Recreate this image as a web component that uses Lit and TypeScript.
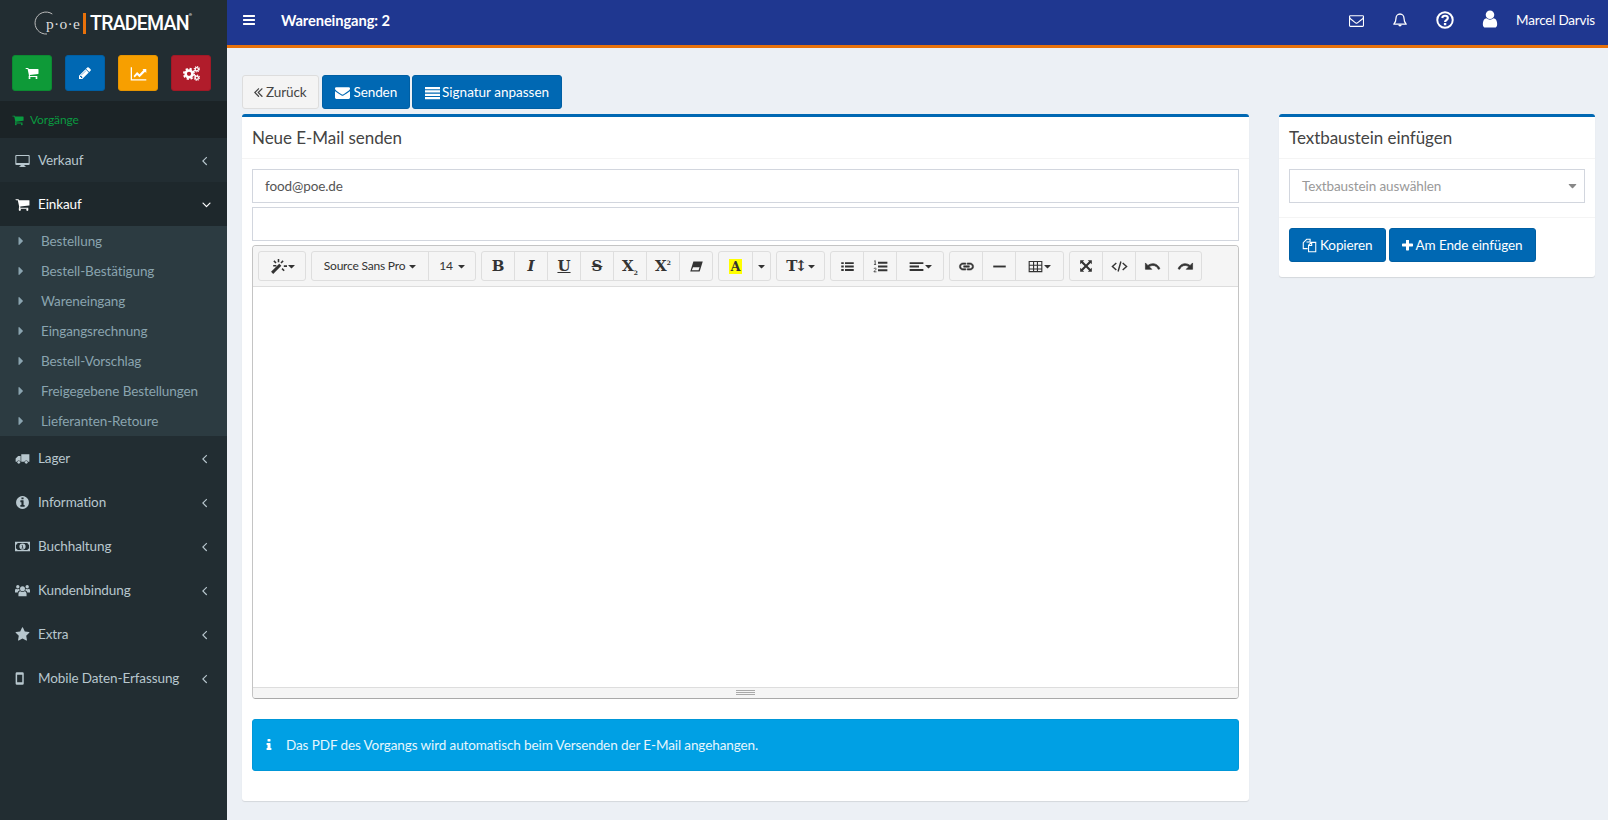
import { LitElement, html, svg, css, TemplateResult } from 'lit';
import { customElement } from 'lit/decorators.js';

// font-awesome 4 glyph outlines, 1792 grid
const FA: Record<string, string> = {
  cart: 'M704 1536q0 52-38 90t-90 38-90-38-38-90 38-90 90-38 90 38 38 90zm896 0q0 52-38 90t-90 38-90-38-38-90 38-90 90-38 90 38 38 90zm128-1088v512q0 24-16.5 42.5t-40.5 21.5l-1044 122q13 60 13 70 0 16-24 64h920q26 0 45 19t19 45-19 45-45 19h-1024q-26 0-45-19t-19-45q0-11 8-31.5t16-36 21.5-40 15.5-29.5l-177-823h-204q-26 0-45-19t-19-45 19-45 45-19h256q16 0 28.5 6.5t19.5 15.5 13 24.5 8 26 5.5 29.5 4.5 26h1201q26 0 45 19t19 45z',
  bars: 'M1664 1344v128q0 26-19 45t-45 19h-1408q-26 0-45-19t-19-45v-128q0-26 19-45t45-19h1408q26 0 45 19t19 45zm0-512v128q0 26-19 45t-45 19h-1408q-26 0-45-19t-19-45v-128q0-26 19-45t45-19h1408q26 0 45 19t19 45zm0-512v128q0 26-19 45t-45 19h-1408q-26 0-45-19t-19-45v-128q0-26 19-45t45-19h1408q26 0 45 19t19 45z',
  pencil: 'M491 1536l91-91-235-235-91 91v107h128v128h107zm523-928q0-22-22-22-10 0-17 7l-542 542q-7 7-7 17 0 22 22 22 10 0 17-7l542-542q7-7 7-17zm-54-192l416 416-832 832h-416v-416zm683 96q0 53-37 90l-166 166-416-416 166-165q36-38 90-38 53 0 91 38l235 234q37 39 37 91z',
  star: 'M1728 647q0 22-26 48l-363 354 86 500q1 7 1 20 0 21-10.5 35.5t-30.5 14.5q-19 0-40-12l-449-236-449 236q-22 12-40 12-21 0-31.5-14.5t-10.5-35.5q0-6 2-20l86-500-364-354q-25-27-25-48 0-37 56-46l502-73 225-455q19-41 49-41t49 41l225 455 502 73q56 9 56 46z',
  user: 'M1536 1399q0 109-62.5 187t-150.5 78h-854q-88 0-150.5-78t-62.5-187q0-85 8.5-160.5t31.5-152 58.5-131 94-89 134.5-34.5q131 128 313 128t313-128q76 0 134.5 34.5t94 89 58.5 131 31.5 152 8.5 160.5zm-256-887q0 159-112.5 271.5t-271.5 112.5-271.5-112.5-112.5-271.5 112.5-271.5 271.5-112.5 271.5 112.5 112.5 271.5z',
  plus: 'M1600 736v192q0 40-28 68t-68 28h-416v416q0 40-28 68t-68 28h-192q-40 0-68-28t-28-68v-416h-416q-40 0-68-28t-28-68v-192q0-40 28-68t68-28h416v-416q0-40 28-68t68-28h192q40 0 68 28t28 68v416h416q40 0 68 28t28 68z',
  infoCircle: 'M1152 1376v-160q0-14-9-23t-23-9h-96v-512q0-14-9-23t-23-9h-320q-14 0-23 9t-9 23v160q0 14 9 23t23 9h96v320h-96q-14 0-23 9t-9 23v160q0 14 9 23t23 9h448q14 0 23-9t9-23zm-128-896v-160q0-14-9-23t-23-9h-192q-14 0-23 9t-9 23v160q0 14 9 23t23 9h192q14 0 23-9t9-23zm640 416q0 209-103 385.5t-279.5 279.5-385.5 103-385.5-103-279.5-279.5-103-385.5 103-385.5 279.5-279.5 385.5-103 385.5 103 279.5 279.5 103 385.5z',
  info: 'M1216 1344v128q0 26-19 45t-45 19h-512q-26 0-45-19t-19-45v-128q0-26 19-45t45-19h64v-384h-64q-26 0-45-19t-19-45v-128q0-26 19-45t45-19h384q26 0 45 19t19 45v576h64q26 0 45 19t19 45zm-128-1152v192q0 26-19 45t-45 19h-256q-26 0-45-19t-19-45v-192q0-26 19-45t45-19h256q26 0 45 19t19 45z',
  angleLeft: 'M1203 544q0 13-10 23l-393 393 393 393q10 10 10 23t-10 23l-50 50q-10 10-23 10t-23-10l-466-466q-10-10-10-23t10-23l466-466q10-10 23-10t23 10l50 50q10 10 10 23z',
  angleDown: 'M1395 736q0 13-10 23l-466 466q-10 10-23 10t-23-10l-466-466q-10-10-10-23t10-23l50-50q10-10 23-10t23 10l393 393 393-393q10-10 23-10t23 10l50 50q10 10 10 23z',
  angleDbl: 'M1011 1376q0 13-10 23l-50 50q-10 10-23 10t-23-10l-466-466q-10-10-10-23t10-23l466-466q10-10 23-10t23 10l50 50q10 10 10 23t-10 23l-393 393 393 393q10 10 10 23zm384 0q0 13-10 23l-50 50q-10 10-23 10t-23-10l-466-466q-10-10-10-23t10-23l466-466q10-10 23-10t23 10l50 50q10 10 10 23t-10 23l-393 393 393 393q10 10 10 23z',
  caretRight: 'M1152 896q0 26-19 45l-448 448q-19 19-45 19t-45-19-19-45v-896q0-26 19-45t45-19 45 19l448 448q19 19 19 45z',
  caretDown: 'M1408 704q0 26-19 45l-448 448q-19 19-45 19t-45-19l-448-448q-19-19-19-45t19-45 45-19h896q26 0 45 19t19 45z',
  envelope: 'M1792 710v794q0 66-47 113t-113 47h-1472q-66 0-113-47t-47-113v-794q44 49 101 87 362 246 497 345 57 42 92.5 65.5t94.5 48 110 24.5h2q51 0 110-24.5t94.5-48 92.5-65.5q170-123 498-345 57-39 100-87zm0-294q0 79-49 151t-122 123q-376 261-468 325-10 7-42.5 30.5t-54 38-52 32.5-57.5 27-50 9h-2q-23 0-50-9t-57.5-27-52-32.5-54-38-42.5-30.5q-91-64-262-182.5t-205-142.5q-62-42-117-115.5t-55-136.5q0-78 41.5-130t118.5-52h1472q65 0 112.5 47t47.5 113z',
  envelopeO: 'M1664 1504v-768q-32 36-69 66-268 206-426 338-51 43-83 67t-86.5 48.5-102.5 24.5h-2q-48 0-102.5-24.5t-86.5-48.5-83-67q-158-132-426-338-37-30-69-66v768q0 13 9.5 22.5t22.5 9.5h1472q13 0 22.5-9.5t9.5-22.5zm0-1051v-24.5l-.5-13-3-12.5-5.5-9-9-7.5-14-2.5h-1472q-13 0-22.5 9.5t-9.5 22.5q0 168 147 284 193 152 401 317 6 5 35 29.5t46 37.5 44.5 31.5 50.5 27.5 43 9h2q20 0 43-9t50.5-27.5 44.5-31.5 46-37.5 35-29.5q208-165 401-317 54-43 100.5-115.5t46.5-131.5zm128-37v1088q0 66-47 113t-113 47h-1472q-66 0-113-47t-47-113v-1088q0-66 47-113t113-47h1472q66 0 113 47t47 113z',
};

// hand drawn ones, 24 grid
const SHAPES: Record<string, TemplateResult> = {
  desktop: svg`<path fill-rule="evenodd" d="M2 3h20a1.5 1.5 0 0 1 1.5 1.5v13a1.5 1.5 0 0 1-1.5 1.5H2a1.5 1.5 0 0 1-1.5-1.5v-13A1.5 1.5 0 0 1 2 3zm.2 1.8v11h19.6v-11z"/><path d="M9 19h6l.6 2H17v1.3H7V21h1.4z"/>`,
  truck: svg`<path d="M10 5h13v12h-2.2a3 3 0 0 0-5.6 0H10zM9 8v9H8.8a3 3 0 0 0-5.6 0H1v-5l4-4z"/><circle cx="6" cy="18" r="2.2"/><circle cx="18" cy="18" r="2.2"/>`,
  money: svg`<path fill-rule="evenodd" d="M0 4.5h24v15H0zm4 2a2.500 2.500 0 0 1-2.500 2.500v6A2.500 2.500 0 0 1 4 17.500h16a2.500 2.500 0 0 1 2.500-2.500V9A2.500 2.500 0 0 1 20 6.500zM12 7a5 5 0 1 1 0 10 5 5 0 0 1 0-10zm-1.600 2.800v1.100h1v3h-1V15h3.200v-1.100h-1V9.800z"/>`,
  users: svg`<circle cx="12" cy="9" r="4"/><circle cx="4.500" cy="6" r="2.700"/><circle cx="19.500" cy="6" r="2.700"/><path d="M5.500 21v-3.500c0-2.500 1.500-4.500 3-4.500 1 .8 2.200 1.300 3.500 1.300s2.500-.5 3.500-1.300c1.500 0 3 2 3 4.500V21z"/><path d="M0 15v-3c0-2 1-3 2-3 .8.600 1.600.9 2.500.9s1.700-.3 2.100-.6C7 10 7.300 11 7.600 12 5.500 12.600 4.500 14 4.300 15zM24 15v-3c0-2-1-3-2-3-.8.600-1.600.9-2.500.9s-1.700-.3-2.100-.6c-.4.700-.7 1.700-1 2.700 2.100.6 3.100 2 3.300 3z"/>`,
  mobile: svg`<path fill-rule="evenodd" d="M3 2h9a2 2 0 0 1 2 2v16a2 2 0 0 1-2 2H3a2 2 0 0 1-2-2V4a2 2 0 0 1 2-2zm.4 4v12h8.200V6z"/>`,
  chart: svg`<path d="M1 3h1.800v17H23v1.800H1z"/><path d="M5 15.500l5-5.500 3.500 3L19 7.200l-1.500-1.500H23v5.500l-1.700-1.700-7.800 7.700-3.500-3-3.500 3.500z"/>`,
  cogs: svg`<circle cx="8.500" cy="12.500" r="4.800" fill="none" stroke="currentColor" stroke-width="3.600"/><circle cx="8.500" cy="12.500" r="7.300" fill="none" stroke="currentColor" stroke-width="2.600" stroke-dasharray="3.100 2.630"/><circle cx="19.500" cy="6" r="2.300" fill="none" stroke="currentColor" stroke-width="1.800"/><circle cx="19.500" cy="6" r="3.700" fill="none" stroke="currentColor" stroke-width="1.600" stroke-dasharray="1.600 1.300"/><circle cx="19.500" cy="18" r="2.300" fill="none" stroke="currentColor" stroke-width="1.800"/><circle cx="19.500" cy="18" r="3.700" fill="none" stroke="currentColor" stroke-width="1.600" stroke-dasharray="1.600 1.300"/>`,
  copy: svg`<path fill="none" stroke="currentColor" stroke-width="1.700" d="M9 17H2V7.500L7.500 2H13v5M13 2l-.2 4.500H8V7M10.500 22V11.500l4.500-4.500h7v15zM15.500 7.500V12h-5"/>`,
  bell: svg`<path fill="none" stroke="currentColor" stroke-width="1.900" stroke-linejoin="round" d="M12 3.200c-3.800 0-6 2.800-6 6 0 5-1.200 7-3.300 9h18.600c-2.100-2-3.300-4-3.300-9 0-3.200-2.200-6-6-6z"/><path d="M10.700 3.500a1.300 1.300 0 1 1 2.600 0zM9.500 19.200h5a2.500 2.500 0 0 1-5 0z"/>`,
  question: svg`<circle cx="12" cy="12" r="10.300" fill="none" stroke="currentColor" stroke-width="2.600"/><path fill="none" stroke="currentColor" stroke-width="2.900" d="M8.300 9.300c.3-2 1.800-3 3.800-3 2.200 0 3.700 1.300 3.700 3 0 2.600-3.700 2.800-3.700 5.200"/><path d="M10.500 16h3.200v3h-3.200z"/>`,
  justify: svg`<path d="M0 3h24v3.600H0zM0 8.400h24V12H0zM0 13.800h24v3.600H0zM0 19.200h24v3.600H0z"/>`,
  magic: svg`<path d="M1.500 19.500L13 8l3 3L4.500 22.500z"/><path fill="none" stroke="currentColor" stroke-width="2.200" d="M12 1.500v4.500M5.500 4l3 3M18.500 4l-3 3M19.500 11.500h4.500M4.500 11H9M17 15l3 3"/>`,
  eraser: svg`<path fill-rule="evenodd" d="M7 4h15l-5 16H2zm-.5 9l-2 5h10.800l1.600-5z"/>`,
  list: svg`<path d="M2 5h4v3H2zM8 5h14v3H8zM2 10.500h4v3H2zM8 10.500h14v3H8zM2 16h4v3H2zM8 16h14v3H8z"/>`,
  numlist: svg`<path d="M8 4.500h15v3H8zM8 10.500h15v3H8zM8 16.500h15v3H8z"/><path fill="none" stroke="currentColor" stroke-width="1.300" d="M2 3.500l1.500-1v6M1.500 8.700h3.500M1.500 16c.3-2 4-2 3.500.3-.3 1.300-3.500 2.500-3.500 4.200H5.500"/>`,
  align: svg`<path d="M1 5h22v3H1zM1 10.500h15v3H1zM1 16h22v3H1z"/>`,
  link: svg`<path stroke="currentColor" stroke-width=".8" d="M3.900 12c0-1.710 1.390-3.100 3.100-3.100h4V7H7c-2.760 0-5 2.240-5 5s2.240 5 5 5h4v-1.900H7c-1.710 0-3.100-1.390-3.100-3.100zM8 13h8v-2H8v2zm9-6h-4v1.900h4c1.710 0 3.100 1.390 3.100 3.100s-1.390 3.100-3.100 3.100h-4V17h4c2.760 0 5-2.240 5-5s-2.240-5-5-5z"/>`,
  minus: svg`<path d="M2 10.500h20v3H2z"/>`,
  table: svg`<path fill-rule="evenodd" d="M1 3h22v18H1zm1.800 1.800V9h5.200V4.800zm7 0V9h4.400V4.800zm6.200 0V9h5.200V4.800zM2.800 10.800V15h5.200v-4.200zm7 0V15h4.400v-4.200zm6.200 0V15h5.200v-4.200zM2.800 16.800v2.400h5.200v-2.400zm7 0v2.400h4.400v-2.400zm6.200 0v2.400h5.200v-2.400z"/>`,
  expand: svg`<path d="M2 2h7L6.800 4.200 12 9.400l5.200-5.200L15 2h7v7l-2.200-2.200L14.600 12l5.200 5.200L22 15v7h-7l2.200-2.200L12 14.600l-5.200 5.200L9 22H2v-7l2.200 2.200L9.400 12 4.200 6.800 2 9z"/>`,
  code: svg`<path fill="none" stroke="currentColor" stroke-width="2" d="M7.500 7L2 12l5.500 5M16.500 7L22 12l-5.500 5M14 5l-4 14"/>`,
  undo: svg`<path stroke="currentColor" stroke-width=".9" d="M12.500 8c-2.650 0-5.050.99-6.900 2.600L2 7v9h9l-3.620-3.620c1.390-1.160 3.160-1.880 5.120-1.880 3.540 0 6.550 2.310 7.600 5.500l2.370-.78C21.080 11.030 17.150 8 12.500 8z"/>`,
  redo: svg`<path stroke="currentColor" stroke-width=".9" d="M18.400 10.600C16.550 8.990 14.150 8 11.500 8c-4.650 0-8.580 3.030-9.960 7.220L3.900 16c1.050-3.190 4.050-5.500 7.600-5.500 1.950 0 3.730.72 5.120 1.880L13 16h9V7l-3.600 3.600z"/>`,
};

const fa = (name: string) =>
  html`<svg class="i" viewBox="0 0 1792 1792"><path d=${FA[name]}></path></svg>`;
const ic = (name: string, cls = '') =>
  html`<svg class="i ${cls}" viewBox="0 0 24 24">${SHAPES[name]}</svg>`;

const MENU_TOP = [{ label: 'Verkauf', icon: ic('desktop') }];
const MENU_BOTTOM = [
  { label: 'Lager', icon: ic('truck') },
  { label: 'Information', icon: fa('infoCircle') },
  { label: 'Buchhaltung', icon: ic('money') },
  { label: 'Kundenbindung', icon: ic('users') },
  { label: 'Extra', icon: fa('star') },
  { label: 'Mobile Daten-Erfassung', icon: ic('mobile') },
];
const SUB_ITEMS = [
  'Bestellung',
  'Bestell-Bestätigung',
  'Wareneingang',
  'Eingangsrechnung',
  'Bestell-Vorschlag',
  'Freigegebene Bestellungen',
  'Lieferanten-Retoure',
];

const caret = html`<svg class="i caret" viewBox="400 500 992 800"><path d=${FA.caretDown}></path></svg>`;
const dbl = html`<svg class="dbl" viewBox="448 448 950 1010"><path d=${FA.angleDbl}></path></svg>`;
const plus = html`<svg class="plus" viewBox="192 192 1408 1408"><path d=${FA.plus}></path></svg>`;

@customElement('app-root')
export class AppRoot extends LitElement {
  static styles = css`
    :host {
      display: block;
      height: 820px;
      overflow: hidden;
      font-family: 'Lato', 'Liberation Sans', sans-serif;
      font-size: 13.5px;
      letter-spacing: -.1px;
      color: #333;
      background: #ecf0f5;
    }
    * { box-sizing: border-box; }
    .i { width: 1em; height: 1em; fill: currentColor; display: block; flex: none; }
    .page { display: grid; grid-template-columns: 227px 1fr; height: 100%; }

    /* sidebar */
    .side { background: #222d32; color: #b8c7ce; }
    .logo { height: 47px; display: flex; align-items: center; padding-left: 34px; position: relative; color: #fff; }
    .logo svg { position: absolute; left: 33px; top: 7px; }
    .poe { font-family: 'Liberation Serif', serif; font-size: 15.5px; color: #ddd; padding-left: 12px; letter-spacing: .3px; width: 49px; }
    .logo-bar { width: 3px; height: 21px; background: #e8710a; margin-right: 4px; }
    .trademan { font-family: 'Roboto', sans-serif; font-weight: 500; font-size: 19.5px; letter-spacing: -.75px; line-height: 1; }
    .trademan sup { font-size: 4px; letter-spacing: 0; vertical-align: 14px; line-height: 0; }
    .quick { display: flex; gap: 13px; padding: 8px 12px 10px; }
    .quick a { width: 40px; height: 36px; border-radius: 3px; display: flex; align-items: center; justify-content: center; color: #fff; font-size: 14px; }
    .q-green { background: #0e9a38; border: 1px solid #0c8a32; }
    .q-blue { background: #0068b3; border: 1px solid #005fa3; }
    .q-orange { background: #f79f00; border: 1px solid #e69400; }
    .q-red { background: #b11c2b; border: 1px solid #a01926; }
    .q-orange .i, .q-red .i { font-size: 17px; }
    .vorgaenge { height: 37px; background: #1b2326; color: #0a9a40; font-size: 12px; display: flex; align-items: center; padding-left: 12px; gap: 6px; }
    .item { height: 44px; display: flex; align-items: center; padding: 0 15px; }
    .item .i:first-child { font-size: 15px; }
    .item .lbl { margin-left: 8px; flex: 1; }
    .item .arrow { font-size: 14px; }
    .item.open { background: #1e282c; color: #fff; }
    .item.open .arrow { margin-right: -2px; }
    .sub { background: #2c3b41; }
    .sub div { height: 30px; display: flex; align-items: center; color: #8aa4af; padding: 0 0 0 14px; gap: 13px; }
    .sub .i { font-size: 14px; }

    /* top bar */
    .right { display: flex; flex-direction: column; min-width: 0; }
    .top { height: 48px; flex: none; background: #1f3790; border-bottom: 3px solid #e8710a; color: #fff; display: flex; align-items: center; padding: 0 13px 5px 15px; }
    .top .bars { font-size: 14px; }
    .top b { margin-left: 25px; flex: 1; font-weight: 700; font-size: 14.7px; }
    .top-icons { display: flex; align-items: center; gap: 28px; }
    .ico-mail { font-size: 15px; }
    .ico-bell { font-size: 16px; }
    .ico-help { font-size: 18px; margin-right: -2px; }
    .ico-user { font-size: 20px; margin-top: -3px; margin-right: -2px; }
    .top-name { margin-left: -10px; letter-spacing: -.2px; }

    /* content */
    .content { flex: 1; display: grid; grid-template-columns: 1007px 316px; gap: 30px; padding: 27px 0 0 15px; align-content: start; }
    .actions { display: flex; gap: 2px; margin-bottom: 5px; }
    .actions .btn { gap: 4px; }
    .actions .btn.sig { gap: 2px; letter-spacing: 0; }
    .btn { height: 34px; display: inline-flex; align-items: center; gap: 3px; padding: 0 12px; border: 1px solid #005fa3; border-radius: 3px; background: #0068b3; color: #fff; }
    .btn .i { font-size: 15px; }
    .actions .btn.light { background: #f4f4f4; color: #444; border-color: #ddd; padding: 0 11px 0 11px; gap: 3px; margin-right: 1px; }
    .dbl { width: 9px; height: 9px; fill: currentColor; display: block; }
    .plus { width: 11px; height: 11px; fill: currentColor; display: block; }
    .aside { margin-top: 39px; }
    .card { background: #fff; border-top: 3px solid #0068b3; border-radius: 3px; box-shadow: 0 1px 1px rgba(0, 0, 0, .1); }
    .card-head { height: 42px; border-bottom: 1px solid #f4f4f4; display: flex; align-items: center; padding: 0 10px 1px; font-size: 17px; letter-spacing: -.05px; color: #444; }
    .card-body { padding: 10px 10px 30px; display: flex; flex-direction: column; }
    .input { height: 34px; border: 1px solid #d2d6de; padding: 0 12px; display: flex; align-items: center; color: #555; background: #fff; margin-bottom: 4px; }

    /* editor */
    .editor { height: 454px; border: 1px solid #c4c4c4; border-bottom-color: #a9a9a9; border-radius: 4px; display: flex; flex-direction: column; overflow: hidden; }
    .tools { height: 41px; flex: none; background: #f5f5f5; border-bottom: 1px solid #ddd; display: flex; gap: 5px; padding: 5px 5px 0 5px; }
    .grp { height: 30px; display: flex; border: 1px solid #dedede; border-radius: 3px; }
    .tb { width: 33px; border-left: 1px solid #dedede; display: flex; align-items: center; justify-content: center; color: #333; font-size: 12px; gap: 1px; }
    .tb:first-child { width: 32px; border-left: 0; }
    .tb .i { font-size: 15px; }
    .tb .big { font-size: 17px; }
    .tb .sm { font-size: 14px; }
    .tb .caret { width: 7px; height: 5px; font-size: 7px; }
    .tb.w46, .tb.w46:first-child { width: 46px; }
    .tb.w47 { width: 47px; }
    .tb.w48 { width: 48px; }
    .tb.w18 { width: 18px; }
    .tb.w33, .tb.w33:first-child { width: 33px; }
    .tb.w47:first-child { width: 47px; }
    .tb.font:first-child { width: 116px; gap: 4px; padding-bottom: 2px; letter-spacing: -.2px; }
    .tb.size { width: 47px; gap: 5px; padding-bottom: 2px; }
    .tb.font .caret, .tb.size .caret { margin-top: 2px; }
    .glyph { font-family: 'DejaVu Serif', serif; font-weight: 700; font-size: 15px; letter-spacing: 0; line-height: 1; color: #333; }
    .glyph.em { font-style: italic; }
    .glyph.u { text-decoration: underline; }
    .glyph.s { text-decoration: line-through; }
    .glyph sub, .glyph sup { font-size: 6px; line-height: 0; }
    .glyph.t { font-size: 15px; letter-spacing: -2.5px; margin-right: 2px; }
    .mark { background: #ff0; padding: 0 1px; display: block; height: 15px; font-size: 13px; line-height: 15px; }
    .area { flex: 1; background: #fff; }
    .grip { height: 11px; flex: none; background: #f5f5f5; border-top: 1px solid #ddd; display: flex; flex-direction: column; align-items: center; padding-top: 2px; gap: 1px; }
    .grip span { width: 19px; height: 1px; background: #a9a9a9; }
    .alert { margin-top: 20px; height: 52px; background: #00a0e4; border: 1px solid #0097d8; border-radius: 3px; color: #e6f6fd; display: flex; align-items: center; padding: 0 0 0 9px; gap: 10px; }
    .alert .i { font-size: 14px; color: #fff; }

    /* text blocks */
    .pick { padding: 10px 10px 14px; border-bottom: 1px solid #f4f4f4; }
    .select { height: 34px; border: 1px solid #d2d6de; padding: 0 7px 0 12px; display: flex; align-items: center; justify-content: space-between; color: #999; }
    .select .caret { width: 9px; height: 6px; font-size: 9px; color: #888; }
    .foot { padding: 10px 10px 15px; display: flex; gap: 3px; }
  `;

  private renderItem(m: { label: string; icon: TemplateResult }) {
    return html`<div class="item">${m.icon}<span class="lbl">${m.label}</span><span class="arrow">${fa('angleLeft')}</span></div>`;
  }

  private renderSidebar() {
    return html`
      <aside class="side">
        <div class="logo">
          <svg width="30" height="30" viewBox="0 0 30 30" fill="none" stroke="#bbb" stroke-width="1">
            <path d="M19.3 7A11 11 0 1 0 14 27"></path>
          </svg>
          <span class="poe">p·o·e</span><span class="logo-bar"></span><span class="trademan">TRADEMAN<sup>®</sup></span>
        </div>
        <div class="quick">
          <a class="q-green">${fa('cart')}</a>
          <a class="q-blue">${fa('pencil')}</a>
          <a class="q-orange">${ic('chart')}</a>
          <a class="q-red">${ic('cogs')}</a>
        </div>
        <div class="vorgaenge">${fa('cart')}<span>Vorgänge</span></div>
        ${MENU_TOP.map((m) => this.renderItem(m))}
        <div class="item open">${fa('cart')}<span class="lbl">Einkauf</span><span class="arrow">${fa('angleDown')}</span></div>
        <div class="sub">
          ${SUB_ITEMS.map((s) => html`<div>${fa('caretRight')}<span>${s}</span></div>`)}
        </div>
        ${MENU_BOTTOM.map((m) => this.renderItem(m))}
      </aside>
    `;
  }

  private renderToolbar() {
    return html`
      <div class="tools">
        <div class="grp"><div class="tb w46">${ic('magic', 'big')}${caret}</div></div>
        <div class="grp">
          <div class="tb font">Source Sans Pro ${caret}</div>
          <div class="tb size">14 ${caret}</div>
        </div>
        <div class="grp">
          <div class="tb"><span class="glyph">B</span></div>
          <div class="tb"><span class="glyph em">I</span></div>
          <div class="tb"><span class="glyph u">U</span></div>
          <div class="tb"><span class="glyph s">S</span></div>
          <div class="tb"><span class="glyph">X<sub>2</sub></span></div>
          <div class="tb"><span class="glyph">X<sup>2</sup></span></div>
          <div class="tb">${ic('eraser')}</div>
        </div>
        <div class="grp">
          <div class="tb w33"><span class="glyph mark">A</span></div>
          <div class="tb w18">${caret}</div>
        </div>
        <div class="grp"><div class="tb w47"><span class="glyph t">T↕</span>${caret}</div></div>
        <div class="grp">
          <div class="tb">${ic('list')}</div>
          <div class="tb">${ic('numlist')}</div>
          <div class="tb w47">${ic('align')}${caret}</div>
        </div>
        <div class="grp">
          <div class="tb">${ic('link', 'big')}</div>
          <div class="tb">${ic('minus')}</div>
          <div class="tb w48">${ic('table')}${caret}</div>
        </div>
        <div class="grp">
          <div class="tb">${ic('expand', 'sm')}</div>
          <div class="tb">${ic('code', 'big')}</div>
          <div class="tb">${ic('undo', 'big')}</div>
          <div class="tb">${ic('redo', 'big')}</div>
        </div>
      </div>
    `;
  }

  render() {
    return html`
      <div class="page">
        ${this.renderSidebar()}
        <div class="right">
          <header class="top">
            <span class="bars">${fa('bars')}</span>
            <b>Wareneingang: 2</b>
            <div class="top-icons">
              <span class="ico-mail">${fa('envelopeO')}</span>
              <span class="ico-bell">${ic('bell')}</span>
              <span class="ico-help">${ic('question')}</span>
              <span class="ico-user">${fa('user')}</span>
              <span class="top-name">Marcel Darvis</span>
            </div>
          </header>
          <div class="content">
            <div>
              <div class="actions">
                <a class="btn light">${dbl}Zurück</a>
                <a class="btn">${fa('envelope')}Senden</a>
                <a class="btn sig">${ic('justify')}Signatur anpassen</a>
              </div>
              <section class="card">
                <div class="card-head">Neue E-Mail senden</div>
                <div class="card-body">
                  <div class="input">food@poe.de</div>
                  <div class="input"></div>
                  <div class="editor">
                    ${this.renderToolbar()}
                    <div class="area"></div>
                    <div class="grip"><span></span><span></span><span></span></div>
                  </div>
                  <div class="alert">${fa('info')}<span>Das PDF des Vorgangs wird automatisch beim Versenden der E-Mail angehangen.</span></div>
                </div>
              </section>
            </div>
            <div class="aside">
              <section class="card">
                <div class="card-head">Textbaustein einfügen</div>
                <div class="pick">
                  <div class="select"><span>Textbaustein auswählen</span>${caret}</div>
                </div>
                <div class="foot">
                  <a class="btn">${ic('copy')}Kopieren</a>
                  <a class="btn">${plus}Am Ende einfügen</a>
                </div>
              </section>
            </div>
          </div>
        </div>
      </div>
    `;
  }
}

declare global {
  interface HTMLElementTagNameMap {
    'app-root': AppRoot;
  }
}
